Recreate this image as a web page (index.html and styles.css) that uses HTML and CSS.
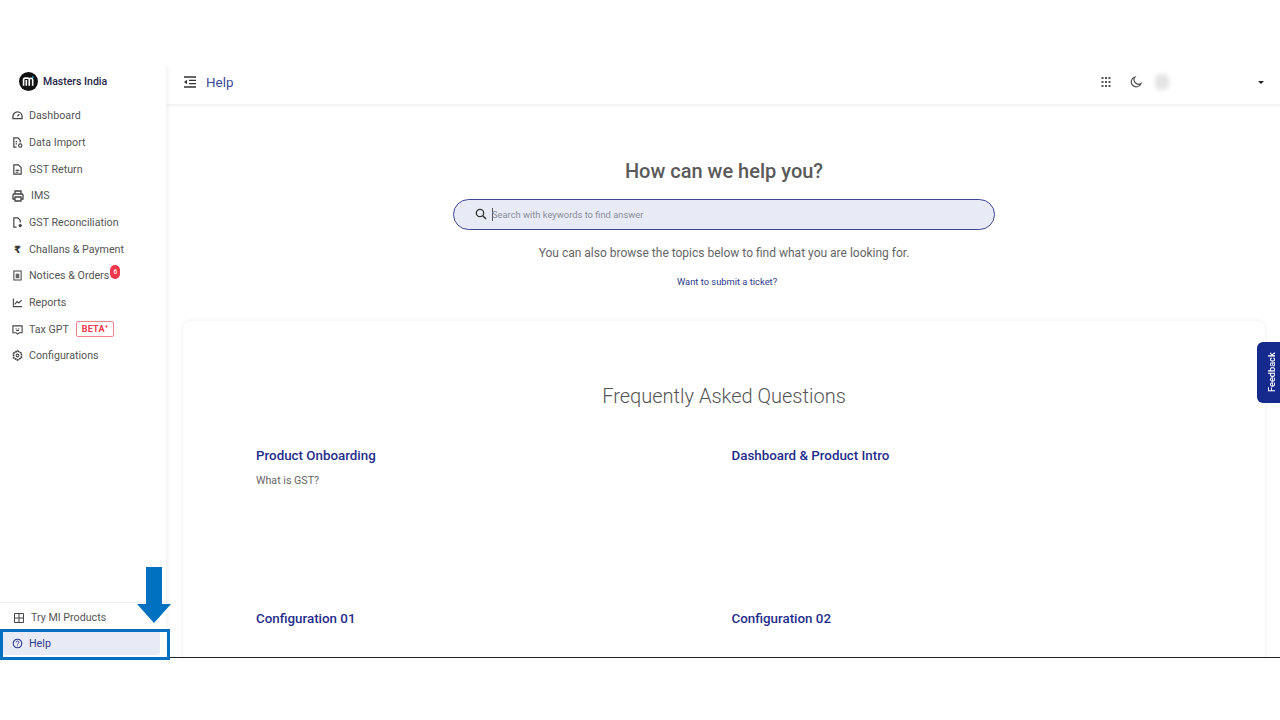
FILE: index.html
```html
<!DOCTYPE html>
<html lang="en">
<head>
<meta charset="utf-8">
<title>Help</title>
<link rel="stylesheet" href="styles.css">
</head>
<body>
<div class="screen">
  <aside class="sidebar">
    <div class="brand">
      <svg class="logo" viewBox="0 0 20 20"><circle cx="10" cy="10" r="10" fill="#111"/><path d="M4.800 14.500V8.200q0-1.800 1.800-1.800h2.400q1.800 0 1.800 1.800v6.300M7.700 14.500V8.500M10.800 8.400q0-1.800 1.800-1.800t1.800 1.800v6.100" fill="none" stroke="#fff" stroke-width="1.700"/><circle cx="14.500" cy="5.500" r="1" fill="#29a3d8"/></svg>
      <span>Masters India</span>
    </div>
    <nav class="nav">
      <a class="item"><svg class="ic" viewBox="0 0 12 12"><path d="M1 9.500V7a5 5 0 0 1 10 0v2.500z M6 7l2-2.500" fill="none" stroke="#444" stroke-width="1.400"/></svg>Dashboard</a>
      <a class="item"><svg class="ic" viewBox="0 0 12 12"><path d="M5 11H2V1h4.500L9 3.500V6M4 5h1.500M4 7.500h1.500" fill="none" stroke="#444" stroke-width="1.300"/><circle cx="9" cy="9.300" r="1.800" fill="none" stroke="#444" stroke-width="1.200"/></svg>Data Import</a>
      <a class="item"><svg class="ic" viewBox="0 0 12 12"><path d="M2 11V1h5l3 3v7z M4 7h4M4 9h3" fill="none" stroke="#444" stroke-width="1.300"/></svg>GST Return</a>
      <a class="item"><svg class="ic big" viewBox="0 0 12 12"><path d="M3 4V1h6v3M3 9H1V5q0-1 1-1h8q1 0 1 1v4H9M3 7h6v4H3z" fill="none" stroke="#444" stroke-width="1.300"/></svg>IMS</a>
      <a class="item"><svg class="ic" viewBox="0 0 12 12"><path d="M5 11H2V1h4.500L9 3.500V6" fill="none" stroke="#444" stroke-width="1.300"/><circle cx="9" cy="9.300" r="1.800" fill="#444"/></svg>GST Reconciliation</a>
      <a class="item"><span class="ic rupee">₹</span>Challans &amp; Payment</a>
      <a class="item"><svg class="ic" viewBox="0 0 12 12"><path d="M2 1h8v10H2z" fill="none" stroke="#444" stroke-width="1.100"/><path d="M4 4h4v5H4z" fill="#666"/></svg>Notices &amp; Orders<span class="count">6</span></a>
      <a class="item"><svg class="ic" viewBox="0 0 12 12"><path d="M1.500 1.500v9h9.500M3 8l2.500-3 2 1.500L10.500 3.500" fill="none" stroke="#444" stroke-width="1.200"/></svg>Reports</a>
      <a class="item"><svg class="ic" viewBox="0 0 12 12"><path d="M1 2h10v7.500H8L6 11 4.500 9.500H1z M4 5h.9M7 5h.9M4.500 7h3" fill="none" stroke="#444" stroke-width="1.200"/></svg>Tax GPT<span class="beta">BETA<sup>+</sup></span></a>
      <a class="item"><svg class="ic" viewBox="0 0 12 12"><path d="M6 1l4.300 2.500v5L6 11 1.700 8.500v-5z" fill="none" stroke="#444" stroke-width="1.700" stroke-dasharray="2.200 .5"/><circle cx="6" cy="6" r="1.500" fill="none" stroke="#444" stroke-width="1.100"/></svg>Configurations</a>
    </nav>
    <div class="foot">
      <a class="item try"><svg class="ic big" viewBox="0 0 12 12"><path d="M1.500 1.500h9v9h-9z M1.500 6h9M6 1.500v9" fill="none" stroke="#444" stroke-width="1"/></svg>Try MI Products</a>
      <a class="item active"><svg class="ic" viewBox="0 0 12 12"><circle cx="6" cy="6" r="4.700" fill="none" stroke="#2d3a8c" stroke-width="1.200"/><path d="M4.500 4.800a1.500 1.500 0 1 1 2.200 1.300Q6 6.500 6 7.200M6 8.200v.8" fill="none" stroke="#2d3a8c" stroke-width="1"/></svg>Help</a>
    </div>
  </aside>
  <div class="main">
    <header class="topbar">
      <svg class="toggle" viewBox="0 0 14 12"><path d="M1 1h12M6 4.300h7M6 7.600h7M1 11h12" fill="none" stroke="#333" stroke-width="1.300"/><path d="M4 3.800v4.400L1 6z" fill="#333"/></svg>
      <span class="page-title">Help</span>
      <div class="tools">
        <svg class="apps" viewBox="0 0 10 10"><path d="M.5 1h2M4 1h2M7.500 1h2M.5 5h2M4 5h2M7.500 5h2M.5 9h2M4 9h2M7.500 9h2" stroke="#555" stroke-width="2" fill="none"/></svg>
        <svg class="moon" viewBox="0 0 12 12"><path d="M5 1a5 5 0 1 0 6 6.500A4.500 4.500 0 0 1 5 1z" fill="none" stroke="#555" stroke-width="1.200"/></svg>
        <span class="avatar"></span>
        <span class="caret"></span>
      </div>
    </header>
    <section class="content">
      <h1 class="headline">How can we help you?</h1>
      <div class="search">
        <svg class="search-ic" viewBox="0 0 12 12"><circle cx="5" cy="5" r="3.700" fill="none" stroke="#333" stroke-width="1.300"/><path d="M7.800 7.800L11 11" stroke="#333" stroke-width="1.500"/></svg>
        <span class="cursor"></span>
        <span class="placeholder">Search with keywords to find answer</span>
      </div>
      <p class="browse">You can also browse the topics below to find what you are looking for.</p>
      <a class="ticket">Want to submit a ticket?</a>
      <div class="card">
        <h2 class="faq">Frequently Asked Questions</h2>
        <div class="topics">
          <div class="topic"><h3>Product Onboarding</h3><p>What is GST?</p></div>
          <div class="topic"><h3>Dashboard &amp; Product Intro</h3></div>
          <div class="topic"><h3>Configuration 01</h3></div>
          <div class="topic"><h3>Configuration 02</h3></div>
        </div>
      </div>
    </section>
    <a class="feedback">Feedback</a>
  </div>
</div>
<div class="callout"></div>
<svg class="arrow" viewBox="0 0 34 56"><path d="M9 0h16v37h9L17 56 0 37h9z" fill="#0070c0"/></svg>
</body>
</html>
```

FILE: styles.css
```css
* { box-sizing: border-box; }
html, body { margin: 0; height: 720px; overflow: hidden; background: #fff; }
body { font-family: Roboto, "Liberation Sans", sans-serif; color: #555; position: relative; }
h1, h2, h3, p { margin: 0; font-weight: 400; }

.screen { margin-top: 66px; height: 592px; display: flex; border-bottom: 1px solid #222; overflow: hidden; }

.sidebar { width: 166px; flex: none; display: flex; flex-direction: column; background: #fff; box-shadow: 1px 0 5px rgba(0,0,0,.07); z-index: 2; }
.brand { height: 36.500px; padding: 0 0 6.500px 19px; display: flex; align-items: center; gap: 5px; font-size: 10.500px; font-weight: 500; color: #26264a; }
.logo { width: 19px; height: 19px; flex: none; }
.nav { flex: 1; }
.item { height: 26.670px; display: flex; align-items: center; padding-left: 12px; font-size: 10.700px; color: #555; position: relative; white-space: nowrap; }
.ic { width: 11px; height: 11px; flex: none; margin-right: 6px; }
.ic.big { width: 12px; height: 12px; margin-right: 7px; }
.rupee { font-size: 10px; line-height: 11px; text-align: center; color: #333; font-weight: 700; font-family: "DejaVu Sans", sans-serif; }
.count { width: 10px; height: 14px; border-radius: 5px; background: #f0384d; color: #fff; font-size: 6.500px; font-weight: 500; display: flex; align-items: center; justify-content: center; margin: -3px 0 0 1px; position: relative; top: -2px; }
.beta { margin-left: 7px; height: 16px; width: 38px; border: 1px solid #f4838d; border-radius: 2px; color: #f0384d; font-size: 9px; font-weight: 700; letter-spacing: .2px; display: flex; align-items: center; justify-content: center; }
.beta sup { font-size: 6px; line-height: 0; margin-top: -6px; }

.foot { height: 55px; border-top: 1px solid #f0f0f0; display: flex; flex-direction: column; }
.try { padding: 2px 0 0 13px; height: 27px; flex: none; }
.try .ic.big { margin-right: 6px; }
.active { margin: 1px 6px 0 3px; height: 24px; flex: none; padding-left: 9px; background: #e8eaf6; border-radius: 3px; color: #2d3a8c; }

.main { flex: 1; min-width: 0; position: relative; display: flex; flex-direction: column; }
.topbar { height: 39px; flex: none; display: flex; align-items: center; padding: 0 16px 6px 17px; box-shadow: 0 1px 3px rgba(0,0,0,.06); border-bottom: 1px solid #f4f4f4; }
.toggle { width: 14px; height: 12px; flex: none; margin-right: 9px; }
.page-title { font-size: 13.400px; color: #3a4796; }
.tools { margin-left: auto; display: flex; align-items: center; }
.apps { width: 10px; height: 10px; margin-right: 19px; }
.moon { width: 12px; height: 12px; margin-right: 13px; }
.avatar { width: 14px; height: 16px; border-radius: 6px; background: #e4e4e4; filter: blur(2px); margin-right: 89px; }
.caret { width: 0; height: 0; border: 3px solid transparent; border-top: 3px solid #222; border-bottom: 0; }

.content { flex: 1; min-height: 0; display: flex; flex-direction: column; align-items: center; padding: 0 15px 0 17px; }
.headline { margin-top: 54px; font-size: 20px; line-height: 24px; font-weight: 500; color: #5a5a5a; }
.search { margin-top: 16px; width: 542px; height: 31px; flex: none; border: 1px solid #3b478f; border-radius: 16px; background: #e8eaf6; display: flex; align-items: center; padding: 0 0 1px 21px; }
.search-ic { width: 12px; height: 12px; flex: none; margin-right: 5px; }
.cursor { width: 1px; height: 13px; background: #555; margin-right: -1px; }
.placeholder { font-size: 9.350px; color: #8a8d99; }
.browse { margin-top: 15px; font-size: 12px; line-height: 16px; color: #666; }
.ticket { margin: 15px 0 0 6px; font-size: 9.350px; line-height: 12px; color: #2d3a8c; }
.card { margin-top: 33px; width: 100%; flex: none; height: 400px; background: #fff; border-radius: 8px; box-shadow: 0 0 5px rgba(0,0,0,.08); padding: 63px 73px 0; }
.faq { font-size: 20px; line-height: 24px; font-weight: 300; text-align: center; color: #555; }
.topics { margin-top: 40px; display: grid; grid-template-columns: 475.500px 1fr; grid-auto-rows: 163px; }
.topic h3 { font-size: 13.350px; line-height: 16px; font-weight: 500; color: #1f2d8a; }
.topic p { margin-top: 10px; font-size: 10.700px; line-height: 14px; color: #666; }

.feedback { position: absolute; right: 0; top: 276px; width: 23px; height: 61px; padding-right: 5px; background: #152a8c; color: #fff; font-size: 9.200px; font-weight: 500; display: flex; align-items: center; justify-content: center; writing-mode: vertical-rl; transform: rotate(180deg); border-radius: 0 6px 6px 0; }

.callout { position: absolute; left: 0; top: 629px; width: 170px; height: 31px; border: 3px solid #0070c0; z-index: 5; }
.arrow { position: absolute; left: 137px; top: 567px; width: 34px; height: 56px; z-index: 5; }
```
